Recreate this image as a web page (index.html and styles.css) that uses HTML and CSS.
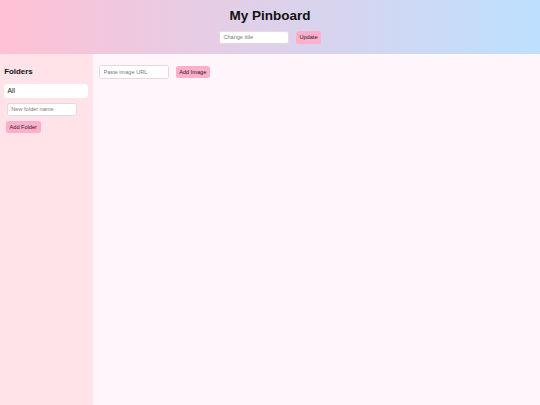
FILE: index.html
```html
<!DOCTYPE html>
<html lang="en">
<head>
<meta charset="utf-8">
<title>My Pinboard</title>
<link rel="stylesheet" href="styles.css">
</head>
<body>
<header class="header">
  <h1 class="title">My Pinboard</h1>
  <div class="title-row">
    <input class="field" type="text" placeholder="Change title">
    <button class="btn">Update</button>
  </div>
</header>
<div class="layout">
  <aside class="sidebar">
    <h3 class="sidebar-title">Folders</h3>
    <div class="folder">All</div>
    <input class="field folder-input" type="text" placeholder="New folder name">
    <button class="btn folder-btn">Add Folder</button>
  </aside>
  <main class="main">
    <div class="add-row">
      <input class="field" type="text" placeholder="Paste image URL">
      <button class="btn">Add Image</button>
    </div>
  </main>
</div>
</body>
</html>
```
FILE: styles.css
```css
* { box-sizing: border-box; }
html, body { margin: 0; padding: 0; height: 100%; }
body {
  font-family: "Liberation Sans", Arial, sans-serif;
  color: #111;
  display: flex;
  flex-direction: column;
  background: #fff6fb;
}
.header {
  height: 54px;
  flex: 0 0 54px;
  background: linear-gradient(to right, #ffc1d5, #bde0fe);
  display: flex;
  flex-direction: column;
  align-items: center;
}
.title {
  margin: 0;
  padding-top: 8px;
  font-size: 13.5px;
  line-height: 16px;
  font-weight: bold;
}
.title-row {
  margin-top: 6.7px;
  display: flex;
  align-items: center;
  gap: 7px;
}
.field {
  width: 70px;
  height: 13.5px;
  padding: 0 3.5px;
  border: 0.5px solid #e6d8df;
  border-radius: 2.5px;
  background: #fff;
  font-family: "Liberation Sans", Arial, sans-serif;
  font-size: 5.6px;
  color: #222;
  outline: none;
}
.field::placeholder { color: #7a7a7a; }
.btn {
  height: 12.4px;
  padding: 0 3.6px;
  border: none;
  border-radius: 2.5px;
  background: #ffafcc;
  font-family: "Liberation Sans", Arial, sans-serif;
  font-size: 5.6px;
  color: #1a1a1a;
  line-height: 12.4px;
}
.layout {
  flex: 1;
  display: flex;
}
.sidebar {
  width: 92.5px;
  flex: 0 0 92.5px;
  background: #ffe3e9;
  padding: 4.2px 4.2px;
  display: flex;
  flex-direction: column;
  align-items: flex-start;
}
.sidebar-title {
  margin: 8.7px 0 8.1px;
  font-size: 7.9px;
  line-height: 9px;
  font-weight: bold;
}
.folder {
  width: 84.3px;
  height: 13.7px;
  padding: 0 3.3px;
  background: #fff;
  border-radius: 3.4px;
  font-size: 6.75px;
  line-height: 13.7px;
}
.folder-input {
  margin: 5px 0 0 2.6px;
  height: 13.3px;
}
.folder-btn {
  margin: 4.7px 0 0 1.8px;
  height: 12.6px;
  line-height: 12.6px;
}
.main {
  flex: 1;
  padding: 11px 6.5px;
}
.add-row {
  display: flex;
  align-items: center;
  gap: 6.7px;
}
.add-row .field { height: 14px; }
```
